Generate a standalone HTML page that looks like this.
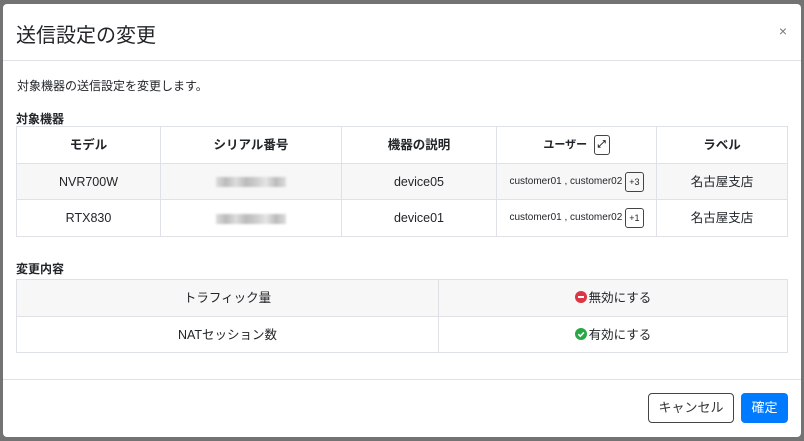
<!DOCTYPE html>
<html><head><meta charset="utf-8"><style>
*{box-sizing:border-box;margin:0;padding:0}
body{width:804px;height:441px;background:#737373;font-family:"Liberation Sans","Noto Sans CJK JP",sans-serif;color:#212529;position:relative;overflow:hidden}
.m{position:absolute;left:3px;top:4px;width:798px;height:433px;background:#fff;border-radius:4px}
.hd{position:absolute;left:0;top:0;width:100%;height:57px;border-bottom:1px solid #dee2e6}
.hd h1{position:absolute;left:13px;top:15px;font-size:20px;font-weight:400;white-space:nowrap}
.x{position:absolute;right:14px;top:19px;font-size:14px;color:#777}
.t{position:absolute;font-size:12px;white-space:nowrap}
.b{font-weight:bold}
table{position:absolute;border-collapse:collapse;font-size:12.5px;text-align:center}
td,th{border:1px solid #dee2e6;line-height:16px;vertical-align:middle}
th{font-weight:bold;font-size:12.5px}
.g td{background:#f7f7f7}
.sm{font-size:10px}
.pill{display:inline-block;border:1px solid #444;border-radius:3px;font-size:9px;padding:0 3px;height:20px;line-height:18px;vertical-align:middle;margin-left:3px}
.blur{display:inline-block;width:70px;height:10px;background:linear-gradient(90deg,#ddd,#bbb,#ddd,#bbb,#ccc,#e5e5e5,#bbb,#ddd);filter:blur(1px);vertical-align:middle}
.ft{position:absolute;left:0;top:375px;width:100%;border-top:1px solid #dee2e6}
.btn{position:absolute;top:389px;height:30px;border-radius:4px;font-size:13px;line-height:30px;text-align:center}
.ic{display:inline-block;width:12px;height:12px;border-radius:50%;vertical-align:-1px;margin-right:2px;position:relative}
</style></head><body>
<div class="m">
<div class="hd"><h1>送信設定の変更</h1><span class="x">×</span></div>
<div class="t" style="left:14px;top:73px">対象機器の送信設定を変更します。</div>
<div class="t b" style="left:13px;top:106px">対象機器</div>
<table style="left:13px;top:122px;width:772px">
<tr style="height:37px"><th style="width:144px">モデル</th><th style="width:181px">シリアル番号</th><th style="width:155px">機器の説明</th><th style="width:160px"><span style="font-size:11px;vertical-align:middle">ユーザー</span> <span class="pill" style="font-size:10px">⤢</span></th><th>ラベル</th></tr>
<tr class="g" style="height:36px"><td>NVR700W</td><td><span class="blur"></span></td><td>device05</td><td class="sm"><span style="vertical-align:middle">customer01 , customer02</span><span class="pill">+3</span></td><td>名古屋支店</td></tr>
<tr style="height:37px"><td>RTX830</td><td><span class="blur"></span></td><td>device01</td><td class="sm"><span style="vertical-align:middle">customer01 , customer02</span><span class="pill">+1</span></td><td>名古屋支店</td></tr>
</table>
<div class="t b" style="left:13px;top:256px">変更内容</div>
<table style="left:13px;top:275px;width:772px">
<tr class="g" style="height:37px"><td style="width:422px">トラフィック量</td><td><span class="ic" style="background:#dc3545"><span style="position:absolute;left:3px;top:5px;width:6px;height:2px;background:#fff"></span></span>無効にする</td></tr>
<tr style="height:36px"><td>NATセッション数</td><td><span class="ic" style="background:#28a745"><svg width="12" height="12" style="position:absolute;left:0;top:0"><path d="M3.3 6.2l2 2 3.6-3.8" stroke="#fff" stroke-width="1.6" fill="none"/></svg></span>有効にする</td></tr>
</table>
<div class="ft"></div>
<div class="btn" style="left:645px;width:86px;border:1px solid #444;color:#333;line-height:28px">キャンセル</div>
<div class="btn" style="left:738px;width:47px;background:#007bff;color:#fff">確定</div>
</div>
</body></html>
